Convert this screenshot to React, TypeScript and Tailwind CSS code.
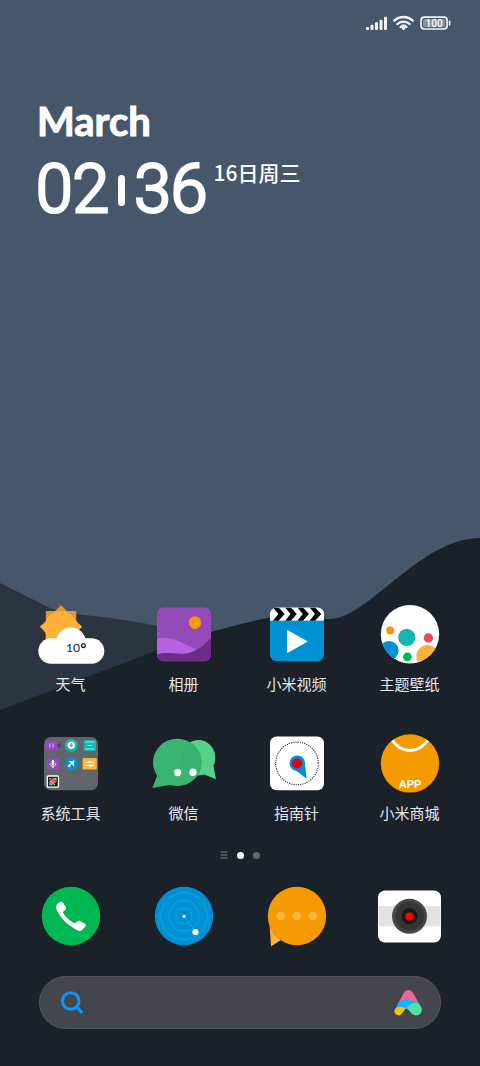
import type { ReactNode } from "react";

type AppEntry = { name: string; icon: ReactNode };

function Icon({ children }: { children: ReactNode }) {
  return (
    <svg viewBox="0 0 72 72" className="block size-[72px]" aria-hidden="true">
      {children}
    </svg>
  );
}

function Wallpaper() {
  return (
    <svg
      viewBox="0 0 480 1066"
      preserveAspectRatio="none"
      className="absolute inset-0 -z-10 size-full"
      aria-hidden="true"
    >
      <rect width="480" height="1066" fill="#47576b" />
      <path d="M0 583 L50 608 Q62 613 80 614.5 Q125 619 157 626 L230 640 V760 H0 Z" fill="#2b3541" />
      <path
        d="M0 710 L145 655 C180 640 235 624 268 618 C290 615 312 619 330 619 C368 619 420 538 480 538 V1066 H0 Z"
        fill="#1b2129"
      />
    </svg>
  );
}

function WeatherIcon() {
  return (
    <Icon>
      <rect x="10.8" y="13" width="30.4" height="31" fill="#e6952b" />
      <path d="M26 7 L47 28.7 L26 50 L5 28.7 Z" fill="#e6952b" />
      <path d="M10.8 29 L26 14 L41.2 29 V50 H10.8 Z" fill="#ffb13b" />
      <path d="M8 26 L5 28.7 L20 44 H32 L47 28.7 L44 26 Z" fill="#fbad3a" />
      <circle cx="26" cy="29.5" r="16.5" fill="#ffb13b" />
      <rect x="3.3" y="40.3" width="66" height="25.4" rx="12.7" fill="#fff" />
      <circle cx="36" cy="44.2" r="14.8" fill="#fff" />
      <text x="31" y="54" fontSize="12" fill="#222" className="font-['Lato',sans-serif]">
        10
      </text>
      <circle cx="48.4" cy="47.6" r="1.9" fill="none" stroke="#222" strokeWidth="1.3" />
    </Icon>
  );
}

function GalleryIcon() {
  return (
    <Icon>
      <clipPath id="gallery">
        <rect x="9" y="9.6" width="54" height="53.6" rx="6.5" />
      </clipPath>
      <g clipPath="url(#gallery)">
        <rect x="9" y="9" width="54" height="55" fill="#944bb8" />
        <path d="M9 40.5 C24 37 34 46 49 51.3 L37 60 L9 60 Z" fill="#b762e0" />
        <path d="M63 39.5 C57 46 53 50 48.5 51.7 C41 56 36 56 30 55.5 C22 55 14 54.6 9 56.5 V64 H63 Z" fill="#6b2d87" />
      </g>
      <circle cx="47" cy="24.6" r="6.3" fill="#f59a00" />
    </Icon>
  );
}

function VideoIcon() {
  return (
    <Icon>
      <clipPath id="video">
        <rect x="9" y="9.6" width="54" height="53.6" rx="6.5" />
      </clipPath>
      <g clipPath="url(#video)">
        <rect x="9" y="9" width="54" height="14" fill="#fff" />
        <rect x="9" y="22.7" width="54" height="41" fill="#0090d4" />
        {[0, 12.2, 24.4, 36.6].map((dx) => (
          <path
            key={dx}
            d="M12 9.6 H17.6 L23.6 16 L17.6 22.7 H12 L17.4 16 Z"
            transform={`translate(${dx} 0)`}
            fill="#000"
          />
        ))}
      </g>
      <path d="M26 31.7 L46.8 43.4 L26 55.3 Z" fill="#fff" />
    </Icon>
  );
}

function ThemeIcon() {
  return (
    <Icon>
      <clipPath id="theme">
        <circle cx="36" cy="36.2" r="29.2" />
      </clipPath>
      <circle cx="36" cy="36.2" r="29.2" fill="#fff" />
      <g clipPath="url(#theme)">
        <circle cx="16.2" cy="32.4" r="4" fill="#f59a00" />
        <circle cx="32.8" cy="39.3" r="8.6" fill="#15b5b0" />
        <circle cx="54.4" cy="40" r="4.7" fill="#ee4958" />
        <circle cx="15" cy="52.5" r="9.6" fill="#0090d4" />
        <circle cx="53.4" cy="58" r="11" fill="#ffb13b" />
        <circle cx="33.4" cy="59" r="4.4" fill="#00b852" />
      </g>
    </Icon>
  );
}

function ToolsIcon() {
  return (
    <Icon>
      <rect x="9" y="10" width="54" height="53.3" rx="7" fill="#60656b" />
      <rect x="10.5" y="13.7" width="12" height="9.8" rx="1" fill="#944bb8" />
      <path d="M22.5 17 L25.5 16 V21 L22.5 20 Z" fill="#6b2d87" />
      <path d="M14.8 16.5 V20.5 M18 16.5 V20.5" stroke="#d9b8ea" strokeWidth="1" />
      <circle cx="36.3" cy="18.3" r="6.5" fill="#15b5b0" />
      <circle cx="36.3" cy="18.3" r="3.7" fill="#fff" />
      <path d="M36.3 16.3 V20.3 M34.3 18.3 H38.3" stroke="#15b5b0" strokeWidth="1.1" />
      <rect x="48.7" y="13" width="12.3" height="11" rx="1.2" fill="#15b5b0" />
      <path d="M50.8 15.8 V15 H59 V15.8 M52.5 18.5 H57.3 M50.8 21.2 V22 H59 V21.2" fill="none" stroke="#a6e8e4" strokeWidth="0.9" />
      <rect x="12" y="31" width="11.8" height="11.8" rx="1.2" fill="#944bb8" />
      <rect x="16.6" y="33" width="2.6" height="5" rx="1.3" fill="#fff" />
      <path d="M15 36.3 C15 40.3 20.8 40.3 20.8 36.3 M17.9 39.3 V41" fill="none" stroke="#fff" strokeWidth="1" />
      <circle cx="36.3" cy="36.7" r="6.5" fill="#0090d4" />
      <path d="M33.3 39.7 L39.3 33.7" stroke="#fff" strokeWidth="1.3" />
      <path d="M33.2 34 L37.8 34.6 L38.6 35.4 L39.2 39.8 L36.6 36.6 Z" fill="#fff" />
      <path d="M32.8 37.9 L34.4 38.6 L35.1 40.2" fill="none" stroke="#fff" strokeWidth="1" />
      <rect x="47.6" y="31" width="14.2" height="11.4" rx="1.2" fill="#ffb13b" />
      <path d="M50 35.3 H59 M50 38.3 H59" stroke="#fff" strokeWidth="1" />
      <path d="M53 35.3 L55 33.8 V35.3 Z M56 39.8 L54 38.3 H57 Z" fill="#fff" stroke="#fff" strokeWidth="0.6" />
      <rect x="12.3" y="49" width="11.2" height="11.2" rx="1" fill="#222" stroke="#fff" strokeWidth="1.3" />
      <path d="M14.3 51 H17 L14.3 53.5 Z" fill="#f59a00" />
      <path d="M14.3 54.5 L18 51 L21.7 55 L18 57 Z" fill="#e05aa8" />
      <path d="M18 51 H21.5 V54 Z" fill="#b6d93a" />
      <path d="M14.3 54.5 L18.5 58.2 H14.3 Z" fill="#4cc3e8" />
      <path d="M15 54 L20 58" stroke="#f6e04a" strokeWidth="1" />
    </Icon>
  );
}

function WeChatIcon() {
  return (
    <Icon>
      <clipPath id="bubble">
        <ellipse cx="29.3" cy="35.4" rx="24.3" ry="23.6" />
      </clipPath>
      <ellipse cx="50.5" cy="30.7" rx="16.8" ry="17.7" fill="#55d287" />
      <path d="M65.5 39 L68 52.2 L54 46.5 Z" fill="#55d287" />
      <path d="M9.8 47 L4.3 61 L24 57.5 Z" fill="#37b571" />
      <ellipse cx="29.3" cy="35.4" rx="24.3" ry="23.6" fill="#37b571" />
      <ellipse cx="50.5" cy="30.7" rx="16.8" ry="17.7" fill="#36b16f" clipPath="url(#bubble)" />
      <circle cx="29.7" cy="45.6" r="3.6" fill="#fff" />
      <circle cx="45" cy="45.2" r="3.7" fill="#fff" />
    </Icon>
  );
}

function CompassIcon() {
  return (
    <Icon>
      <rect x="9" y="9.6" width="54" height="53.6" rx="6.5" fill="#fff" />
      <circle cx="36" cy="36.4" r="21.3" fill="none" stroke="#222" strokeWidth="1.1" strokeDasharray="1.1 1.13" />
      <path d="M28.9 39 L45.7 51.7 L43.8 35.5 Z" fill="#0090d4" />
      <circle cx="36.3" cy="36.3" r="7.8" fill="#0090d4" />
      <circle cx="36" cy="36.4" r="5.2" fill="#e60012" />
    </Icon>
  );
}

function StoreIcon() {
  return (
    <Icon>
      <clipPath id="store">
        <circle cx="36" cy="36.4" r="29.2" />
      </clipPath>
      <circle cx="36" cy="36.4" r="29.2" fill="#f59a00" />
      <path d="M17 11.5 C27 27.5 45 27.5 55 11.5" fill="none" stroke="#fff" strokeWidth="3" clipPath="url(#store)" />
      <text x="36" y="60.5" textAnchor="middle" fontSize="11" fontWeight="700" fill="#fff" className="font-['Liberation_Sans',sans-serif]">
        APP
      </text>
    </Icon>
  );
}

function PhoneIcon() {
  return (
    <Icon>
      <circle cx="36" cy="36" r="29.2" fill="#00b852" />
      <path
        d="M24.3 22.3 C25.5 21.6 27.3 21.6 28 22.7 L30.6 26.6 C31.3 27.9 31 29 30.2 30 L27.8 32 C30 36.5 35 41.3 39.8 43.3 L42.3 41.4 C43.4 40.7 44.4 40.7 45.5 41.2 L49.8 43.5 C51 44.4 51 45.8 50.2 46.7 L46.8 50.2 C45.7 51.3 43.7 51 41.8 50 C34 46 25.6 38.6 21.8 30.3 C20.8 28 20.8 25.7 22 24.3 Z"
        fill="#fff"
      />
    </Icon>
  );
}

function RadarIcon() {
  return (
    <Icon>
      <circle cx="36" cy="36" r="29.2" fill="#0090d4" />
      {[8, 15.3, 23.3].map((r) => (
        <circle key={r} cx="36" cy="36" r={r} fill="none" stroke="#16a5dc" strokeWidth="1" />
      ))}
      <path d="M36 36 L52 58" stroke="#16b0e0" strokeWidth="1" />
      <circle cx="36" cy="36.3" r="1.6" fill="#fff" />
      <circle cx="47.5" cy="52" r="3.1" fill="#fff" />
    </Icon>
  );
}

function MessageIcon() {
  return (
    <Icon>
      <circle cx="36" cy="36" r="29.2" fill="#f59a00" />
      <path d="M8.7 46 L10 66.6 L19.5 60.2 Q12 54.5 8.7 46 Z" fill="#ffb13b" />
      {[20, 36, 52].map((cx) => (
        <circle key={cx} cx={cx} cy="36.2" r="4.4" fill="#ffb440" />
      ))}
    </Icon>
  );
}

function CameraIcon() {
  return (
    <Icon>
      <rect x="4" y="10.5" width="63" height="52" rx="7" fill="#fff" />
      <rect x="4.6" y="26" width="61.8" height="20.3" fill="#e2e2e2" />
      <circle cx="35.5" cy="36.3" r="17.5" fill="#474747" />
      <circle cx="35.5" cy="36.3" r="14.3" fill="#353535" />
      <circle cx="35.5" cy="36.3" r="8" fill="#181818" />
      <circle cx="35.5" cy="36.6" r="4.1" fill="#ff0000" />
    </Icon>
  );
}

const apps: AppEntry[] = [
  { name: "天气", icon: <WeatherIcon /> },
  { name: "相册", icon: <GalleryIcon /> },
  { name: "小米视频", icon: <VideoIcon /> },
  { name: "主题壁纸", icon: <ThemeIcon /> },
  { name: "系统工具", icon: <ToolsIcon /> },
  { name: "微信", icon: <WeChatIcon /> },
  { name: "指南针", icon: <CompassIcon /> },
  { name: "小米商城", icon: <StoreIcon /> },
];

const dock: AppEntry[] = [
  { name: "电话", icon: <PhoneIcon /> },
  { name: "浏览器", icon: <RadarIcon /> },
  { name: "短信", icon: <MessageIcon /> },
  { name: "相机", icon: <CameraIcon /> },
];

function StatusBar() {
  return (
    <header className="flex h-[46px] items-center justify-end pr-[29px]">
      <svg viewBox="0 0 86 16" className="h-4 w-[86px]" aria-hidden="true">
        <g fill="#f1f3f5">
          <rect x="1" y="12" width="3" height="3" rx="1" />
          <rect x="5.5" y="9.8" width="3" height="5.2" rx="1" />
          <rect x="10" y="7.3" width="3" height="7.7" rx="1" />
          <rect x="14.5" y="4.8" width="3" height="10.2" rx="1" />
          <rect x="19" y="1.8" width="3" height="13.2" rx="1" />
        </g>
        <g fill="none" stroke="#f1f3f5" strokeWidth="2.4" strokeLinecap="round">
          <path d="M29.3 5.7 C34.5 0.7 42.5 0.7 47.7 5.7" />
          <path d="M32.4 9 C35.8 5.8 41.2 5.8 44.6 9" />
          <path d="M35.6 12 C37.3 10.3 39.7 10.3 41.4 12" />
        </g>
        <path d="M36 12.6 Q38.5 11 41 12.6 L38.5 15.6 Z" fill="#f1f3f5" />
        <rect x="56.1" y="2.2" width="26" height="11.8" rx="3.2" fill="none" stroke="#f1f3f5" strokeWidth="1.7" />
        <rect x="58" y="4" width="22.2" height="8.2" rx="1.5" fill="#8591a0" />
        <path d="M84.6 6.3 V10" stroke="#f1f3f5" strokeWidth="1.6" strokeLinecap="round" />
        <text x="69.1" y="12" textAnchor="middle" fontSize="10" fontWeight="500" fill="#fff" className="font-['Roboto',sans-serif]">
          100
        </text>
      </svg>
    </header>
  );
}

function Clock() {
  return (
    <section className="px-9 pt-[51px] text-white">
      <p className="pl-px font-['Lato',sans-serif] text-[40px] leading-12 font-bold [-webkit-text-stroke:1px_white]">
        March
      </p>
      <div className="mt-[7px] flex items-start">
        <time className="flex items-center font-['Roboto',sans-serif] text-[66px] leading-[76px] font-light [-webkit-text-stroke:3px_white]">
          <span>02</span>
          <span className="mx-[9px] h-[31px] w-[7px] rounded-full bg-white" />
          <span>36</span>
        </time>
        <span className="ml-1.5 pt-1 font-['Noto_Sans_CJK_SC',sans-serif] text-[21px] leading-8 font-medium">16日周三</span>
      </div>
    </section>
  );
}

export default function App() {
  return (
    <main className="relative isolate flex min-h-screen flex-col overflow-hidden font-['Noto_Sans_CJK_SC',sans-serif]">
      <Wallpaper />
      <StatusBar />
      <Clock />
      <section className="mt-auto px-3.5 pt-10">
        <div className="grid grid-cols-4 gap-y-[33px]">
          {apps.map((app) => (
            <button key={app.name} type="button" className="flex flex-col items-center gap-1">
              {app.icon}
              <span className="text-[15px] leading-5 text-gray-200">{app.name}</span>
            </button>
          ))}
        </div>
        <div className="mt-7 flex h-2 items-center justify-center gap-[9px]">
          <svg viewBox="0 0 8 8" className="size-2" aria-hidden="true">
            <path d="M0.5 1 H7.5 M0.5 4 H7.5 M0.5 7 H7.5" stroke="#596068" strokeWidth="1.3" />
          </svg>
          <span className="size-[7px] rounded-full bg-white" />
          <span className="size-[7px] rounded-full bg-[#62676d]" />
        </div>
        <nav className="mt-[21px] grid grid-cols-4">
          {dock.map((app) => (
            <button key={app.name} type="button" aria-label={app.name} className="flex justify-center">
              {app.icon}
            </button>
          ))}
        </nav>
      </section>
      <form className="mx-[39px] mt-6 mb-[37px] flex h-[53px] items-center rounded-full border border-[#53575d] bg-[#43474d] px-[18px]">
        <svg viewBox="0 0 28 28" className="size-7 shrink-0" aria-hidden="true">
          <g fill="none" stroke="#0c96fb" strokeLinecap="round">
            <circle cx="12.7" cy="12" r="8.3" strokeWidth="3" />
            <path d="M18.8 18.2 L23.4 22.8" strokeWidth="3.2" />
          </g>
        </svg>
        <input type="search" aria-label="搜索" className="h-full min-w-0 flex-1 bg-transparent px-3 text-[15px] text-white outline-none" />
        <button type="button" aria-label="小爱同学">
          <svg viewBox="0 0 28 28" className="size-7" aria-hidden="true">
            <clipPath id="assistant">
              <path d="M9.9 3.6 C11.6 0.2 17 0.2 18.8 3.6 L26.8 17.8 C29 22.5 26 26.2 22 26.2 C19.5 26.2 18 25 16.8 23.3 L14.2 20.2 C13 18.9 11.5 19.4 10.6 20.5 L7.8 24.4 C6.6 26.1 4.3 26.7 2.5 25.6 C0.4 24.3 0.2 22 1.2 20.2 Z" />
            </clipPath>
            <g clipPath="url(#assistant)">
              <rect width="28" height="28" fill="#f4609a" />
              <path d="M0 18 C4 9.5 20 7.5 28 18 V28 H0 Z" fill="#15b2fb" />
              <path d="M0 19.5 Q6.5 16.5 12 19.5 L8 28 H0 Z" fill="#ffc300" />
              <ellipse cx="20.5" cy="20.5" rx="8.2" ry="6.3" transform="rotate(-12 20.5 20.5)" fill="#55e19c" />
            </g>
          </svg>
        </button>
      </form>
    </main>
  );
}
